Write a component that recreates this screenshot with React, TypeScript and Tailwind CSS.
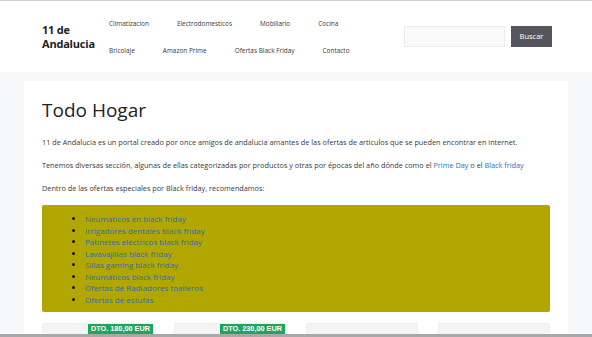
import React from "react";

const navItems = [
  "Climatizacion",
  "Electrodomesticos",
  "Mobiliario",
  "Cocina",
  "Bricolaje",
  "Amazon Prime",
  "Ofertas Black Friday",
  "Contacto",
];

const listItems = [
  "Neumaticos en black friday",
  "Irrigadores dentales black friday",
  "Patinetes eléctricos black friday",
  "Lavavajillas black friday",
  "Sillas gaming black friday",
  "Neumáticos black friday",
  "Ofertas de Radiadores toalleros",
  "Ofertas de estufas",
];

const cards = ["DTO. 180,00 EUR", "DTO. 230,00 EUR", "", ""];

export default function App() {
  return (
    <div className="h-[337px] overflow-hidden border-t border-[#cfcfcf] border-b-[3px] border-b-[#a8a8a8] bg-[#f7f8f9] font-['Open_Sans',sans-serif] text-[#3a3a3a]">
      <header className="flex h-[71px] items-center bg-white pl-[42px]">
        <div className="w-[53px] text-[11px] font-bold leading-[14px] tracking-[-0.2px] text-[#222]">
          11 de
          <br />
          Andalucia
        </div>
        <nav className="flex w-[290px] flex-wrap">
          {navItems.map((n) => (
            <a
              key={n}
              className="block px-[14px] text-[6.45px] leading-[27px] text-[#3a3a3a]"
            >
              {n}
            </a>
          ))}
        </nav>
        <div className="ml-[19px] flex items-center gap-[6px]">
          <div className="h-[21px] w-[101px] border border-[#ececec] bg-[#fafafa]" />
          <button className="h-[21px] w-[41px] bg-[#55555e] text-[7.5px] text-white">
            Buscar
          </button>
        </div>
      </header>

      <main className="px-[24px] pt-[9px]">
        <div className="bg-white px-[18px] pt-[16px]">
          <h1 className="text-[19px] font-normal leading-[26px] text-[#222]">
            Todo Hogar
          </h1>
          <p className="mt-[13px] text-[7.3px] leading-[12px]">
            11 de Andalucia es un portal creado por once amigos de andalucia amantes de las ofertas de articulos que se pueden encontrar en internet.
          </p>
          <p className="mt-[11px] text-[7.3px] leading-[12px]">
            Tenemos diversas sección, algunas de ellas categorizadas por productos y otras por épocas del año dónde como el{" "}
            <a className="text-[#1e73be]">Prime Day</a> o el{" "}
            <a className="text-[#1e73be]">Black friday</a>
          </p>
          <p className="mt-[11px] text-[7.3px] leading-[12px]">
            Dentro de las ofertas especiales por Black friday, recomendamos:
          </p>
          <div className="mt-[11px] h-[107px] rounded-[2px] bg-[#b2a700] pl-[43px] pt-[8px]">
            <ul className="list-disc">
              {listItems.map((l) => (
                <li key={l} className="text-[8px] leading-[11.5px] text-[#111]">
                  <a className="text-[#2d6db5]">{l}</a>
                </li>
              ))}
            </ul>
          </div>
          <div className="mt-[11px] grid grid-cols-4 gap-[20px]">
            {cards.map((c, i) => (
              <div
                key={i}
                className="flex h-[40px] justify-end border border-[#f0f0f0] bg-gradient-to-b from-[#f3f3f3] to-white"
              >
                {c && (
                  <span className="h-[10px] bg-[#1ea65a] px-[3px] font-['Liberation_Sans',sans-serif] text-[7.3px] font-bold leading-[10px] text-white">
                    {c}
                  </span>
                )}
              </div>
            ))}
          </div>
        </div>
      </main>
    </div>
  );
}
